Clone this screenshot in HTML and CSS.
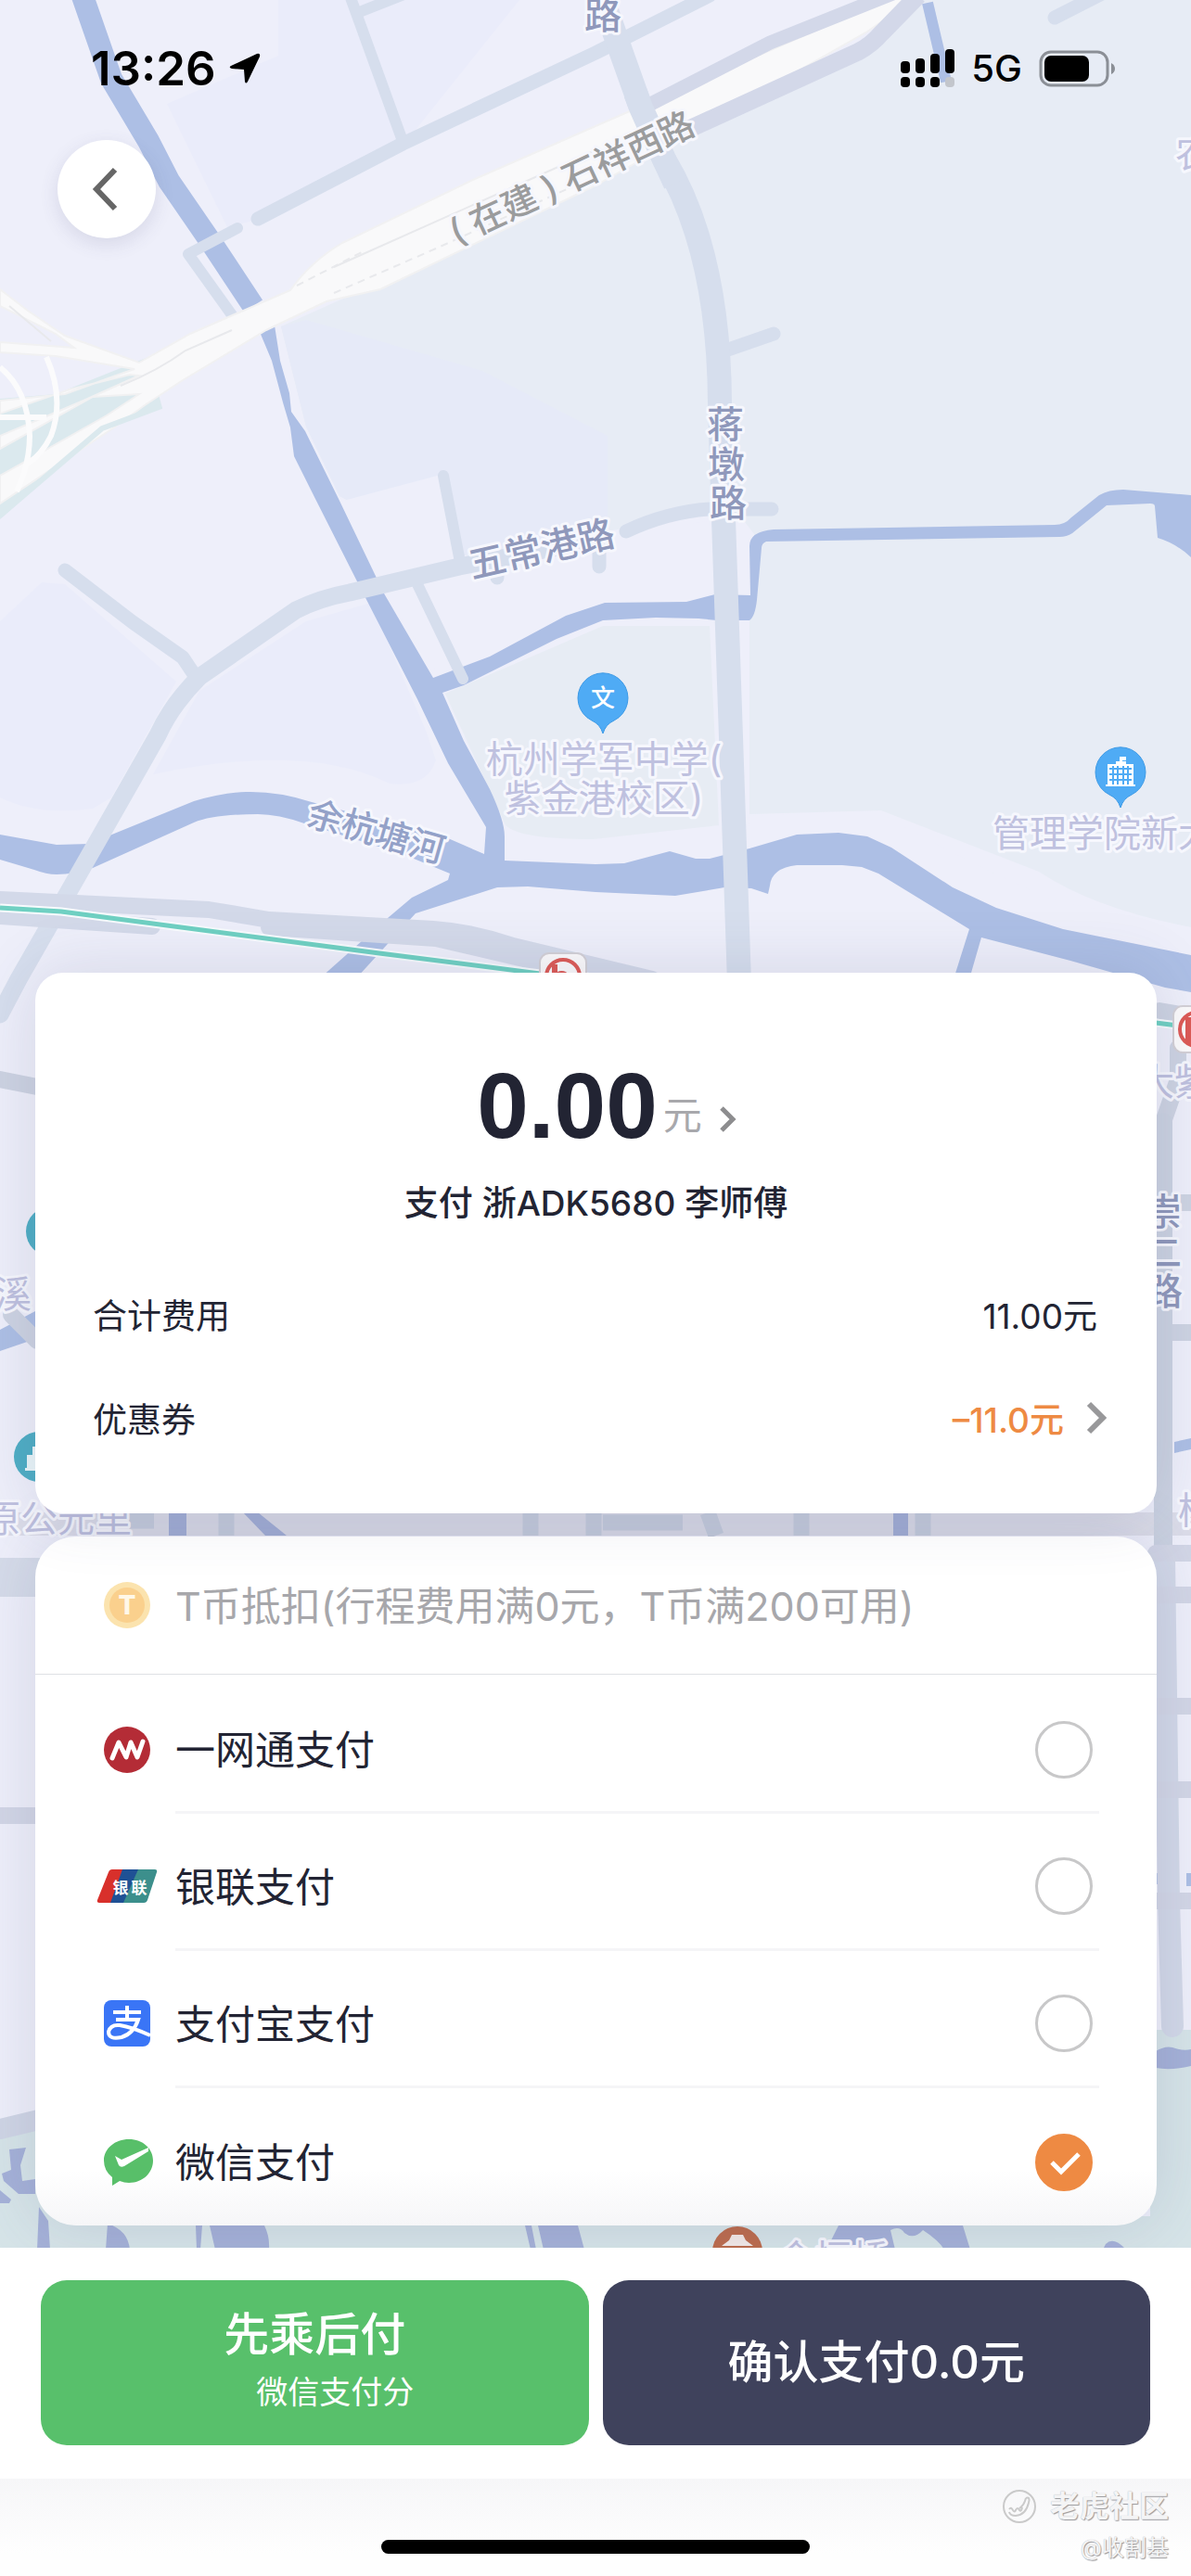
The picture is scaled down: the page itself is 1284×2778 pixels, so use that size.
FILE: index.html
```html
<!DOCTYPE html>
<html lang="zh-CN">
<head>
<meta charset="utf-8">
<meta name="viewport" content="width=device-width, initial-scale=1">
<title>支付</title>
<link rel="stylesheet" href="styles.css">
</head>
<body>
<div class="screen">
  <svg class="map" viewBox="0 0 1284 2778" preserveAspectRatio="xMidYMin slice" aria-hidden="true">
    <rect width="1284" height="2778" fill="#eeeffa"/>
    <!-- land blocks -->
    <g>
      <path fill="#eaecfa" d="M180 112L300 60V0H560L440 150L280 236L245 245ZM0 670L45 628L70 630L190 735L120 860L100 872Q40 880 0 860ZM215 745L330 670L400 650L460 790L470 820Q460 850 420 845Q330 800 165 835Z"/>
      <path fill="#e7ecf5" d="M303 352L642 200L740 140L930 50L990 0H1284V1000Q1180 980 1120 940L950 874L808 878V670L816 580L778 530L760 555L495 600L366 535L330 460Z"/>
      <path fill="#e6eaf8" d="M303 352L330 345L520 400L655 470V570L495 600L366 535L330 460Z"/>
      <path fill="#eeeffa" d="M370 540L475 512L500 610L640 580L775 560V650L642 660L478 735L415 640ZM808 880L945 875Q1060 940 1140 972L1284 1000V1110H790Z"/>
      <path fill="#e7ecf4" d="M480 748L650 675H765L775 890L640 905Q560 905 545 890Z"/>
      <path fill="#dbe9ee" d="M0 430L60 425L160 385L175 440L120 455L0 560Z"/>
      <path fill="#dcdde9" d="M0 1631H1284V1656H0Z"/>
      <path fill="#d6e4e8" d="M0 2306L60 2290V2440H0ZM1240 2189H1284V2440H0V2390H1240Z"/>
    </g>
    <!-- rivers -->
    <g fill="#adbfe5">
      <path fill="none" stroke="#adbfe5" stroke-width="24" d="M89 -4L120 85L160 152L182 195L228 262L273 330"/>
      <path d="M280 358L296 351L302 389L312 424L314 444L329 465L366 540L414 640L467 731L528 708L610 664L652 650L740 649L771 641L809 642L808 589Q808 573 834 571L1137 566Q1148 566 1155 558L1185 534Q1195 528 1211 528L1284 534V601Q1268 586 1248 580L1245 546Q1245 543 1240 543L1193 545L1156 575Q1150 579 1142 579L826 584Q821 586 821 591L816 647Q814 665 808 669H773L753 667L707 666L650 669L600 689L500 739L477 747L500 799L528 851Q544 885 544 902V928L642 932L673 931L722 918L750 926H765L808 915L859 900L904 898L935 902L961 914L1027 957L1074 979L1146 1002L1284 1030V1070L1256 1065L1154 1036L1058 1011L1045 1056H1028L1045 1002L947 942L929 935L908 933H859Q832 936 830 955L828 964L810 958L781 957L728 966L642 962L569 956L536 957L448 985L385 1054H346L418 990L444 968L483 949L485 942L434 921L328 888Q300 878 278 878Q230 878 209 887L100 936Q80 943 61 943Q50 943 37 938L0 927V900L61 911L96 910L209 864Q240 855 265 854Q300 853 336 865L483 904L522 921L524 892L483 823L450 754L385 627L341 540L317 492L313 461L305 434L293 389Z"/>
      <path fill="none" stroke="#adbfe5" stroke-width="12" d="M1000 3L1020 88"/>
      <path d="M0 1434L38 1414V1444L0 1457ZM1266 1555L1284 1551V1563L1266 1567ZM1246 2020H1256V2032H1246ZM1279 2020H1284V2034H1279Z"/>
    </g>
    <g fill="#a5b1d8">
      <path d="M182 1631H201V1656H182ZM262 1631H278L309 1656H286ZM963 1631H979V1656H963ZM1246 2212Q1256 2206 1264 2208Q1275 2212 1284 2210V2228Q1262 2233 1246 2230Z"/>
      <path d="M10 2318L28 2316L22 2335L24 2352L38 2350V2366L20 2366L4 2352L2 2344L12 2340ZM0 2362L12 2372L10 2376H0ZM42 2380L52 2395L54 2426H40ZM116 2398Q138 2405 140 2426H114ZM211 2400H218L216 2426H212ZM226 2400H285Q291 2412 290 2426H232ZM566 2400H573L578 2426H572ZM580 2400H623L630 2426H586ZM904 2400L895 2418L920 2426H965L960 2405Q970 2400 975 2408Q985 2416 995 2405Q1012 2416 1018 2426H1046L1038 2400ZM1192 2420Q1200 2412 1212 2424H1190Z"/>
    </g>
    <!-- roads -->
    <g fill="none" stroke="#d6deed" stroke-linecap="round" stroke-linejoin="round">
      <path stroke-width="12" d="M376 -8L434 152M385 14L438 -7"/>
      <path stroke-width="15" d="M278 236L434 155L642 57L765 -5M1137 19L1190 -8M785 377L834 360M70 615L143 671L197 709L211 730"/>
      <path stroke-width="12" d="M256 246L203 274L256 348M450 630L499 732M478 513L496 606"/>
      <path stroke-width="15" d="M536 614V623M646 590V611M675 573Q720 552 765 549H832"/>
      <path stroke-width="26" d="M650 0L671 60L691 116L716 172Q775 270 776 434L779 530L797 1060"/>
      <path stroke-width="19" d="M0 1094L20 1056L104 909L170 793Q185 760 215 730L319 658Q345 645 377 639L495 611L642 582"/>
      <path stroke-width="18" stroke="#d3d9e9" d="M0 970L225 981L290 992L467 1002Q510 1005 553 1020L703 1056M290 1000L470 1012L590 1040M0 988L164 999"/>
      <path stroke-width="18" stroke="#cdd3e2" d="M0 1164Q20 1168 50 1174M12 1418L40 1446M1254 1210L1270 1164V1130M1246 1297H1284M1254 1437H1284M1250 1090L1284 1096"/>
      <path stroke-width="20" stroke="#cbd2e1" d="M1254 1210V1680"/>
      <path stroke-width="24" stroke="#d2d8e8" d="M1255 1680L1260 2050L1264 2185"/>
      <path stroke-width="18" stroke="#d2d6e6" d="M1246 1675H1284M1246 1720H1284M1246 1840H1284M1246 1930H1284M1246 2050H1284M0 1958H40"/>
      <path stroke-width="42" stroke="#d5dbe9" stroke-linecap="butt" d="M0 1701H50"/>
      <path stroke-width="22" stroke="#cfd5e5" d="M0 2296L50 2284"/>
      <path stroke-width="17" stroke="#c8cfdf" stroke-linecap="butt" d="M130 1640H166M244 1631V1656M572 1631V1656M640 1631V1656M650 1642H736M763 1631L772 1656M864 1631V1656M995 1631V1656"/>
    </g>
    <!-- elevated road under construction -->
    <path fill="#f9f9fa" stroke="#f1f1f2" stroke-width="2" d="M0 513L115 448L150 425L100 428L0 484V470L90 432L150 405L140 404L75 420L0 446V432L70 425L125 405L145 398L60 384L0 380V369L80 375L60 360L0 330V312L30 335L70 362L150 391L205 360L246 342L313 313Q335 282 369 262L512 193L642 136L681 119L965 -4H990L935 34L740 145L642 200L410 312L352 325L287 356L197 410L156 437L123 461L0 543Z"/>
    <g fill="none" stroke="#e8e9ec" stroke-width="2">
      <path d="M130 416Q170 400 200 378L250 356M360 288L642 162M10 330L55 368"/>
      <path stroke-dasharray="8 6" d="M320 308L390 272M360 316L470 268L642 190"/>
    </g>
    <g fill="none" stroke="#fbfbfc" stroke-width="6">
      <path d="M0 396Q30 420 32 470Q32 500 18 530M50 385Q70 430 55 470Q45 490 30 500M0 450L50 450"/>
    </g>
    <path fill="none" stroke="#dbe9ee" stroke-width="6" d="M174 438L110 462L0 556"/>
    <path fill="none" stroke="#d3d8e9" stroke-width="15" d="M690 118L830 46L975 -12"/>
    <path fill="none" stroke="#d3d8e9" stroke-width="19" d="M728 146L925 56Q940 48 950 36L990 -5"/>
    <path fill="none" stroke="#d6deed" stroke-width="26" d="M685 100L691 116L716 172L728 198"/>
    <!-- metro line -->
    <path fill="none" stroke="#f7fbfd" stroke-width="9" d="M0 979L66 983L409 1028L590 1051M1246 1103L1270 1106"/>
    <path fill="none" stroke="#6fd0c2" stroke-width="5" d="M0 979L66 983L409 1028L590 1051M1246 1103L1270 1106"/>
    <g id="metro">
      <rect x="582" y="1028" width="50" height="50" rx="10" fill="#fbfafb" stroke="#d3d0d6" stroke-width="2"/>
      <circle cx="607" cy="1053" r="18" fill="none" stroke="#dd5a55" stroke-width="4"/>
      <path fill="none" stroke="#dd5a55" stroke-width="6" d="M598 1068V1040M598 1054Q606 1046 612 1054V1068"/>
    </g>
    <use href="#metro" x="683" y="57"/>
    <!-- place markers -->
    <g fill="#4fabf5" stroke="#3f9be6" stroke-width="1">
      <path id="pin" d="M650 791Q647 781 638 777A27 27 0 1 1 662 777Q653 781 650 791Z"/>
      <use href="#pin" x="558" y="80"/>
    </g>
    <text class="pin-text" x="650" y="762">文</text>
    <g fill="#fff">
      <path d="M1194 846V824H1203V821H1207V816H1214V820H1210V821H1214V824H1222V846H1224V848H1192V846Z"/>
      <path stroke="#4fabf5" stroke-width="2" fill="none" d="M1196 829H1220M1196 835H1220M1196 841H1220M1200 826V846M1205 826V846M1211 826V846M1216 826V846"/>
    </g>
    <circle cx="55" cy="1328" r="27" fill="#4faec5"/>
    <circle cx="42" cy="1571" r="27" fill="#4faec5"/>
    <path fill="#eaf6f9" d="M29 1569H35V1560H40V1586H27V1583H29Z"/>
    <circle cx="795" cy="2428" r="27" fill="#bd6c4d"/>
    <path fill="#f3e9e6" d="M789 2410H801L804 2416L812 2422H778L786 2416Z"/>
    <!-- labels -->
    <g class="label road">
      <text x="650" y="31">路</text>
      <text x="782" y="472">蒋</text>
      <text x="783" y="515">墩</text>
      <text x="785" y="557">路</text>
      <text transform="translate(587 606) rotate(-13)">五常港路</text>
      <text x="1254" y="1321">崇</text>
      <text x="1254" y="1365">二</text>
      <text x="1255" y="1407">路</text>
    </g>
    <text class="label building" transform="translate(622 204) rotate(-25)">( 在建 ) 石祥西路</text>
    <text class="label water" transform="translate(402 910) rotate(16)">余杭塘河</text>
    <g class="label poi">
      <text x="651" y="833">杭州学军中学(</text>
      <text x="651" y="875">紫金港校区)</text>
      <text class="from-left" x="1070" y="913">管理学院新大</text>
      <text class="from-left" x="1267" y="180">农</text>
      <text class="from-left" x="1226" y="1181">大紫</text>
      <text class="from-left" x="-6" y="1410">溪</text>
      <text class="from-left" x="-18" y="1652">原公元里</text>
      <text class="from-left" x="1270" y="1643">杨</text>
      <text class="from-left" x="838" y="2450">金恒桥</text>
    </g>
  </svg>

  <header class="top">
    <div class="status">
      <div class="status-group">
        <span class="clock">13:26</span>
        <svg width="34" height="34" viewBox="0 0 34 34" aria-hidden="true"><path d="M2 14L30 1Q34 0 33 4L20 31Q18 34 17 31L16 18L3 17Q-1 16 2 14Z"/></svg>
      </div>
      <div class="status-group">
        <svg width="58" height="42" viewBox="0 0 58 42" aria-hidden="true"><rect y="13" width="10" height="13" rx="4"/><rect x="16" y="10" width="10" height="16" rx="4"/><rect x="32" y="5" width="10" height="21" rx="4"/><rect x="48" width="10" height="26" rx="4"/><rect y="30" width="10" height="11" rx="4"/><rect x="16" y="30" width="10" height="11" rx="4"/><rect x="32" y="30" width="10" height="11" rx="4"/><rect x="48" y="30" width="10" height="11" rx="4" fill="#c3c6cc"/></svg>
        <span class="network">5G</span>
        <svg width="82" height="40" viewBox="0 0 82 40" aria-hidden="true"><rect x="2" y="2" width="72" height="36" rx="11" fill="none" stroke="#8b8f96" stroke-width="3"/><rect x="6" y="6" width="48" height="28" rx="7"/><path fill="#8b8f96" d="M78 14Q82 16 82 20Q82 24 78 26Z"/></svg>
      </div>
    </div>
    <button class="back" type="button" aria-label="返回">
      <svg width="32" height="50" viewBox="0 0 32 50" aria-hidden="true"><path d="M25 4L5 25L25 46" fill="none" stroke="#666" stroke-width="6"/></svg>
    </button>
  </header>

  <main class="sheet">
    <section class="card bill">
      <button class="total" type="button">
        <strong>0.00</strong><span class="unit">元</span>
        <svg width="20" height="28" viewBox="0 0 20 28" aria-hidden="true"><path d="M3 2L15 14L3 26" fill="none" stroke="#8d8d8f" stroke-width="5"/></svg>
      </button>
      <p class="driver">支付 浙ADK5680 李师傅</p>
      <div class="line"><span>合计费用</span><span>11.00元</span></div>
      <button class="line coupon" type="button">
        <span>优惠券</span>
        <span class="discount">–11.0元
          <svg width="22" height="36" viewBox="0 0 22 36" aria-hidden="true"><path d="M3 3L18 18L3 33" fill="none" stroke="#98989a" stroke-width="6"/></svg>
        </span>
      </button>
    </section>

    <form class="card methods">
      <div class="coin">
        <svg class="logo" viewBox="0 0 66 60" aria-hidden="true"><circle cx="33" cy="30" r="25" fill="#fbe3ae"/><circle cx="33" cy="30" r="19" fill="#fad08d"/><text class="coin-text" x="33" y="40">T</text></svg>
        <span class="name">T币抵扣(行程费用满0元，T币满200可用)</span>
      </div>
      <label class="method">
        <svg class="logo" viewBox="0 0 66 60" aria-hidden="true"><circle cx="33" cy="30" r="25" fill="#b42c36"/><path d="M17 39L24 22L32 38L37 22L44 38L50 21" fill="none" stroke="#fff" stroke-width="5" stroke-linecap="round" stroke-linejoin="round"/></svg>
        <span class="name">一网通支付</span>
        <input type="radio" name="pay">
      </label>
      <label class="method">
        <svg class="logo" viewBox="0 0 66 60" aria-hidden="true"><path fill="#d8302b" d="M17 12H32L20 48H3Q0 48 1 45L13 15Q14 12 17 12Z"/><path fill="#1f5195" d="M28 12H48L36 48H15Z"/><path fill="#3c8f8c" d="M45 12H63Q66 12 65 15L55 45Q54 48 51 48H29Z"/><text class="union-text" x="26" y="38">银</text><text class="union-text" x="46" y="38">联</text></svg>
        <span class="name">银联支付</span>
        <input type="radio" name="pay">
      </label>
      <label class="method">
        <svg class="logo" viewBox="0 0 66 60" aria-hidden="true"><rect x="8" y="5" width="50" height="50" rx="8" fill="#3a75f6"/><path d="M18 18H48M33 11V26M21 26H45Q40 41 27 45Q13 48 13 39Q15 31 25 32Q38 34 58 43" fill="none" stroke="#fff" stroke-width="4"/></svg>
        <span class="name">支付宝支付</span>
        <input type="radio" name="pay">
      </label>
      <label class="method">
        <svg class="logo" viewBox="0 0 66 60" aria-hidden="true"><path fill="#58bf69" d="M35 5C50 5 61 15 61 28S50 52 35 52Q30 52 25 50L17 55V46Q8 39 8 28C8 15 20 5 35 5Z"/><path fill="#fff" d="M20 23L27 27L56 14V18L30 34Q26 36 24 33Z"/></svg>
        <span class="name">微信支付</span>
        <input type="radio" name="pay" checked>
      </label>
    </form>
  </main>

  <div class="actions">
    <button class="action later" type="button"><span>先乘后付</span><small>微信支付分</small></button>
    <button class="action confirm" type="button">确认支付0.0元</button>
  </div>

  <footer class="home">
    <div class="indicator"></div>
    <div class="credit">
      <div class="brand">
        <svg width="38" height="38" viewBox="0 0 38 38" aria-hidden="true"><g fill="none" stroke="#cacaca" stroke-width="2"><circle cx="19" cy="19" r="17"/><path d="M26 10Q31 8 29 15Q26 28 15 29Q9 29 8 25M26 10Q24 18 19 21M8 22Q10 19 12 23Q14 26 15 23Q17 19 19 23Q21 25 22 20"/></g></svg>
        <span>老虎社区</span>
      </div>
      <span class="author">@收割基</span>
    </div>
  </footer>
</div>
</body>
</html>
```
FILE: styles.css
```css
* { box-sizing: border-box; }

body {
  margin: 0;
  font-family: Inter, "Noto Sans CJK SC", sans-serif;
  color: #222433;
}

button {
  margin: 0;
  padding: 0;
  border: 0;
  background: none;
  font: inherit;
  color: inherit;
}

svg { display: block; flex: none; }

.screen {
  position: relative;
  display: flex;
  flex-direction: column;
  min-height: 100vh;
  overflow: hidden;
}

/* the map lies behind the whole page */
.map {
  position: absolute;
  inset: 0;
  width: 100%;
  height: 100%;
}

.label {
  font-weight: 500;
  font-size: 40px;
  text-anchor: middle;
  stroke: #f6f7fd;
  stroke-width: 6px;
  stroke-linejoin: round;
  paint-order: stroke;
}
.road { fill: #8f98bb; }
.building { fill: #9b9c9d; font-size: 38px; }
.water { fill: #93a1c8; font-size: 38px; }
.poi { fill: #bfc1df; font-weight: 400; }
.from-left { text-anchor: start; }
.pin-text { fill: #fff; font-size: 26px; font-weight: 500; text-anchor: middle; }

.top, .sheet, .actions, .home { position: relative; }

.top { flex: 1 0 auto; padding: 44px 82px 0 62px; }

.status {
  display: flex;
  justify-content: space-between;
  padding-left: 36px;
  height: 60px;
}
.status-group { display: flex; align-items: center; gap: 18px; color: #000; }
.clock { font-size: 51px; font-weight: 600; line-height: 60px; }
.network { font-size: 40px; font-weight: 500; line-height: 60px; }
.status-group:first-child { gap: 14px; }

.back {
  display: flex;
  align-items: center;
  justify-content: center;
  width: 106px;
  height: 106px;
  margin-top: 47px;
  border-radius: 50%;
  background: #fff;
  box-shadow: 0 6px 20px rgba(70, 70, 120, .14);
}

.sheet {
  display: flex;
  flex-direction: column;
  gap: 25px;
  padding: 0 37px 24px 38px;
}

.card { background: #fff; box-shadow: 0 0 70px rgba(70, 75, 120, .16); }

/* the bill casts its shadow on the card below it */
.bill {
  position: relative;
  z-index: 1;
  padding: 93px 0 46px;
  border-radius: 30px;
}

.total {
  display: flex;
  align-items: baseline;
  justify-content: center;
  width: 100%;
  padding-left: 24px;
  line-height: 100px;
}
.total strong {
  font-family: "Liberation Sans", sans-serif;
  font-size: 100px;
  font-weight: 700;
}
.unit { margin: 0 18px 0 6px; padding-bottom: 4px; font-size: 42px; line-height: 42px; color: #a8a8ac; align-self: flex-end; }
.total .unit { margin-bottom: 14px; }
.total svg { align-self: flex-end; margin-bottom: 21px; }

.driver {
  margin: 32px 0 40px;
  font-size: 37px;
  font-weight: 500;
  line-height: 48px;
  text-align: center;
}

.line {
  display: flex;
  align-items: center;
  justify-content: space-between;
  width: 100%;
  height: 112px;
  padding: 0 64px 2px 62px;
  font-size: 37px;
}
.coupon { padding-right: 54px; }
.discount { display: flex; align-items: center; gap: 24px; font-weight: 500; color: #ee8a43; }

.methods {
  border-radius: 44px;
  font-size: 43px;
  background: linear-gradient(#fff calc(100% - 60px), #f6f6f8);
}
.coin, .method {
  display: flex;
  align-items: center;
  gap: 19px;
  height: 149px;
  padding: 0 69px 0 66px;
}
.coin { color: #a7a7ab; border-bottom: 1px solid #dfe1e5; }
.method {
  height: 148px;
  padding-top: 14px;
  background: linear-gradient(#f5f5f7, #f5f5f7) 151px 0 / calc(100% - 213px) 3px no-repeat;
}
.coin + .method { height: 147px; background: none; }
.method:last-child { height: 151px; }
.logo { width: 66px; height: 60px; }
.name { flex: 1; padding-bottom: 5px; }
.coin-text { fill: #fff8e8; font-size: 28px; font-weight: 800; text-anchor: middle; }
.union-text { fill: #fff; font-size: 17px; font-weight: 700; text-anchor: middle; }

.method input {
  appearance: none;
  width: 62px;
  height: 62px;
  margin: 0;
  border: 3px solid #c8c8c9;
  border-radius: 50%;
}
.method input:checked {
  border-color: #ee8a43;
  background: #ee8a43 url("data:image/svg+xml,%3Csvg xmlns='http://www.w3.org/2000/svg' viewBox='0 0 56 56'%3E%3Cpath d='M15 28L25 38L44 19' fill='none' stroke='white' stroke-width='5'/%3E%3C/svg%3E") center / 56px no-repeat;
}

.actions {
  display: flex;
  gap: 15px;
  padding: 35px 44px 36px;
  background: #fff;
}
.action {
  display: flex;
  flex: 1;
  flex-direction: column;
  align-items: center;
  justify-content: center;
  height: 178px;
  border-radius: 28px;
  font-size: 49px;
  font-weight: 500;
  line-height: 64px;
  color: #fff;
}
.later { background: #58c06b; }
.later small { padding-left: 44px; font-size: 34px; font-weight: 400; line-height: 60px; }
.confirm { background: #3f425c; }

.home {
  display: flex;
  justify-content: center;
  height: 105px;
  background: linear-gradient(#f6f6f8, #fefefe 80px);
}
.indicator {
  align-self: flex-end;
  width: 36%;
  height: 15px;
  margin-bottom: 24px;
  border-radius: 8px;
  background: #000;
}

/* credit mark laid over the corner of the footer */
.credit {
  position: absolute;
  top: 7px;
  right: 24px;
  display: flex;
  flex-direction: column;
  align-items: flex-end;
  gap: 6px;
  color: #f4f4f5;
  text-shadow: 1px 1px 1px #98989c, 0 0 1px #b0b0b4;
}
.brand { display: flex; align-items: center; gap: 14px; font-size: 32px; font-weight: 700; line-height: 46px; }
.author { font-size: 24px; line-height: 32px; }
```
